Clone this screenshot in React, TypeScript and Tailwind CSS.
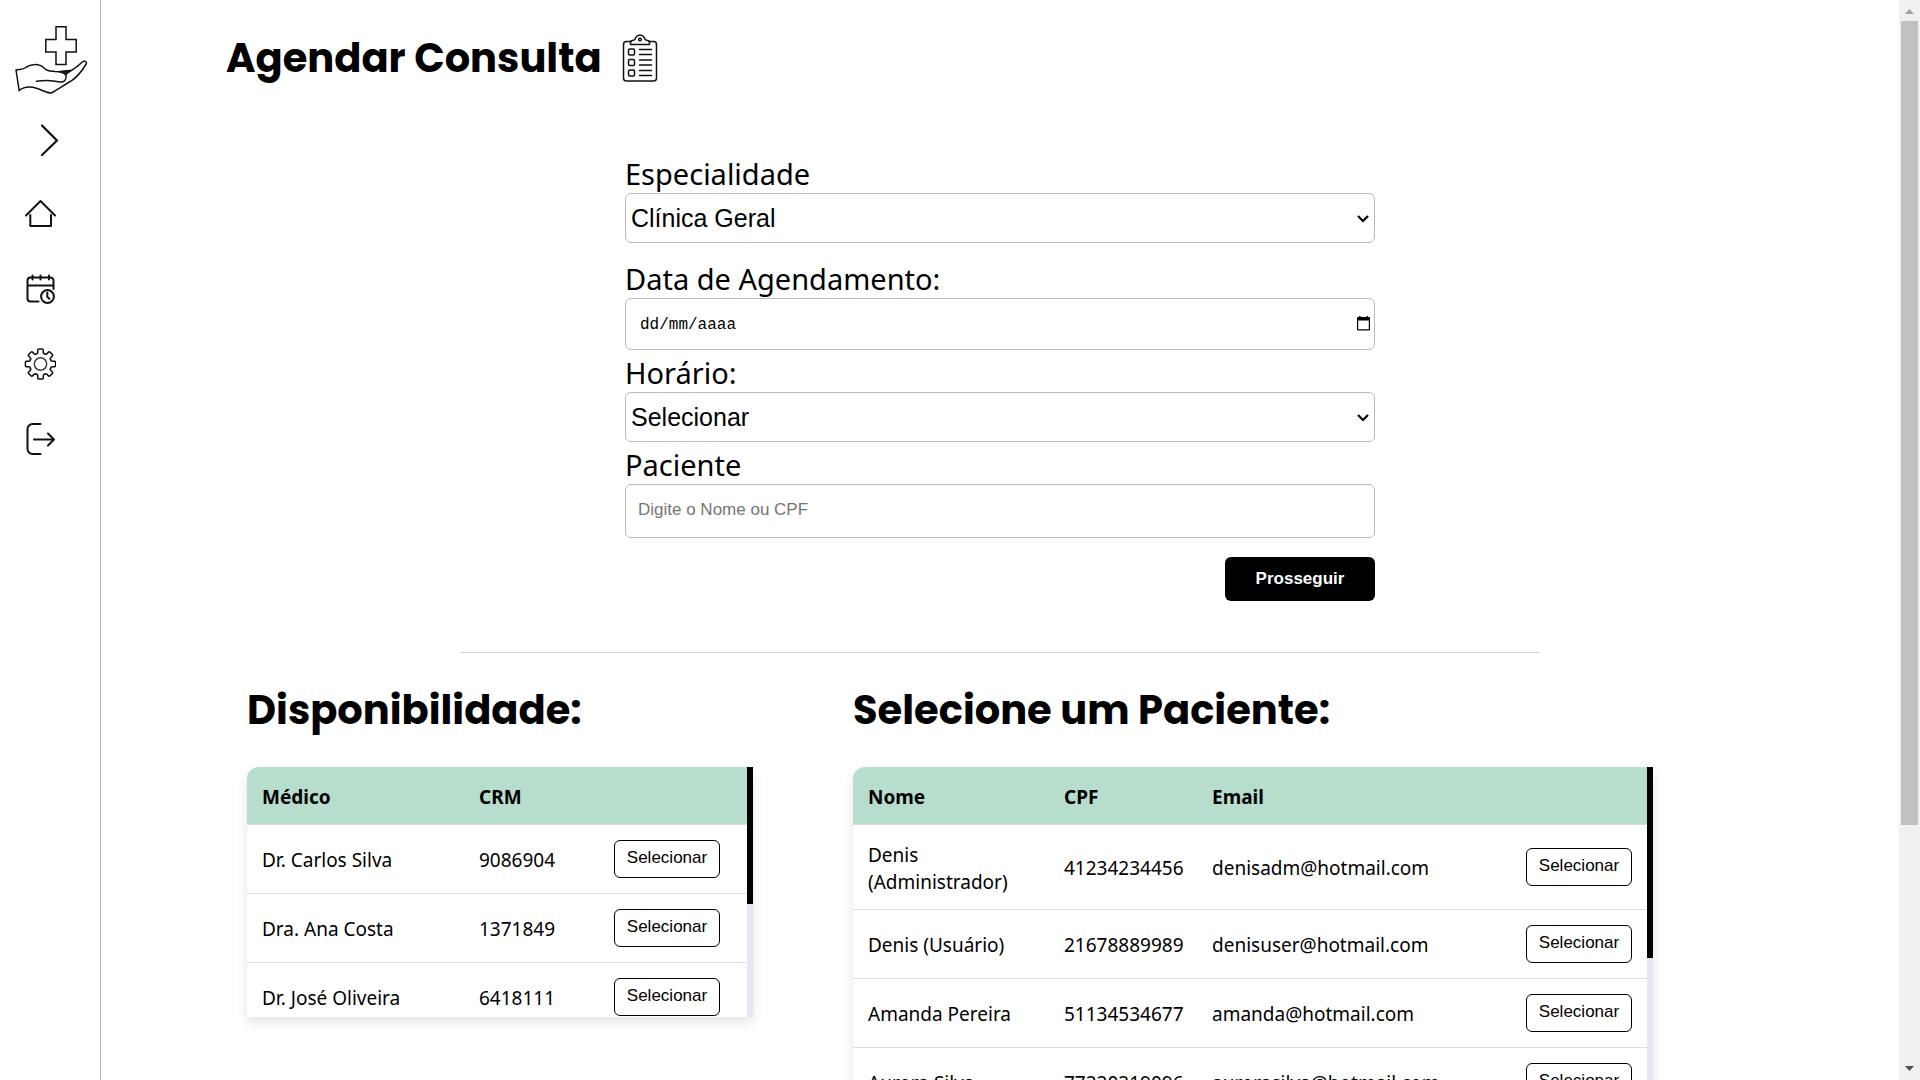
import React from "react";

const line = {
  fill: "none",
  stroke: "#111",
  strokeLinecap: "round" as const,
  strokeLinejoin: "round" as const,
};

function Logo() {
  return (
    <svg width="76" height="72" viewBox="13 24 76 72" strokeWidth="1.5" {...line} strokeLinejoin="miter">
      <path d="M56 26.7h10v12.8h10.2v12.6H66v12.4H56V52.1H45.8V39.5H56z" />
      <path d="M16 70c3-1 6 0 9-2 5-4 14-5 19 0 3 3.500 7 3 11 3.500 5 0 9 .5 11 4 1 4-2 7-6 6.500C52 80 44 80 36.500 81.200M16 70l3.200 20.500c5-4 12-4 18-2 5 1.500 9 4.500 14 4.500 8-4 14-9 20-12 6-4 12-12 15-17 1-3-2-3.500-4.500-1.500-5 5-10 8-16.500 12" />
      <path d="M60 71.500c4-.5 7-1 10-1-2 1.500-3 2.500-4.500 4" fill="#222" />
    </svg>
  );
}

function ChevronIcon() {
  return (
    <svg width="32" height="32" viewBox="0 0 32 32" strokeWidth="2.200" {...line}>
      <path d="M10 1.500 25 16.500 10 31" />
    </svg>
  );
}

function HomeIcon() {
  return (
    <svg width="32" height="32" viewBox="0 0 32 32" strokeWidth="2" {...line}>
      <path d="M2 17.500 16.500 3 31 17.500M6.300 17v11h20.700V17" />
    </svg>
  );
}

function CalendarIcon() {
  return (
    <svg width="32" height="32" viewBox="0 0 32 32" strokeWidth="2" {...line}>
      <path d="M14.500 28.500H6.500a3 3 0 0 1-3-3V7.500a3 3 0 0 1 3-3h20a3 3 0 0 1 3 3v8.500M3.500 12.500h26M8.500 2.500v4M16.500 2.500v4M25 2.500v4" />
      <circle cx="23.500" cy="23.500" r="6.400" />
      <path d="M23.300 19.500v4.200l2 2" />
    </svg>
  );
}

const GEAR = (() => {
  const at = (r: number, deg: number) => {
    const a = ((deg - 90) * Math.PI) / 180;
    return (16.5 + r * Math.cos(a)).toFixed(2) + " " + (16 + r * Math.sin(a)).toFixed(2);
  };
  let d = "";
  for (let k = 0; k < 8; k++) {
    const c = k * 45;
    d += (k ? "Q" + at(10.2, c - 17.5) + " " : "M") + at(12.4, c - 12.5);
    d += "Q" + at(15.2, c - 12) + " " + at(15.2, c - 7);
    d += "L" + at(15.2, c + 7);
    d += "Q" + at(15.2, c + 12) + " " + at(12.4, c + 12.5);
    d += "Q" + at(10.2, c + 17.5) + " " + at(11.2, c + 22.5);
  }
  return d + "Q" + at(10.2, -17.5) + " " + at(12.4, -12.5) + "Z";
})();

function GearIcon() {
  return (
    <svg width="32" height="32" viewBox="0 0 32 32" strokeWidth="1.500" {...line}>
      <path d={GEAR} />
      <circle cx="16.500" cy="16" r="6.200" stroke="#444" />
    </svg>
  );
}

function LogoutIcon() {
  return (
    <svg width="32" height="32" viewBox="0 0 32 32" strokeWidth="2" {...line}>
      <path d="M16.500 1H8.500a5 5 0 0 0-5 5v20a5 5 0 0 0 5 5h8M10 16.500h20M24 10.500l6 6-6 6" />
    </svg>
  );
}

function ClipboardIcon() {
  return (
    <svg width="36" height="48" viewBox="0 0 36 48" strokeWidth="1.500" {...line}>
      <path d="M9 7.500H4.500a3 3 0 0 0-3 3V44a3 3 0 0 0 3 3h27a3 3 0 0 0 3-3V10.500a3 3 0 0 0-3-3H27" />
      <path d="M8.500 10.500V8.500a2 2 0 0 1 2-2c3 0 2.500-1.500 3.500-3.300C15 1.500 16.500 1 18 1s3 .5 4 2.200c1 1.800.5 3.300 3.500 3.300a2 2 0 0 1 2 2v2z" />
      <circle cx="18" cy="5.500" r="1.300" />
      {[15, 25.5, 36].map((y) => (
        <g key={y}>
          <rect x="6.500" y={y} width="6" height="6" rx="1.200" />
          <path d={"M17.500 " + (y + 0.5) + "h12M17.500 " + (y + 5.5) + "h12"} />
        </g>
      ))}
    </svg>
  );
}

const NAV = [
  { label: "Início", Icon: HomeIcon },
  { label: "Agendamentos", Icon: CalendarIcon },
  { label: "Configurações", Icon: GearIcon },
  { label: "Sair", Icon: LogoutIcon },
];

function Sidebar() {
  return (
    <aside className="w-[101px] shrink-0 border-r border-[#b5b5b5]">
      <a href="#inicio" aria-label="Clínica" className="block pt-6 pl-[13px]">
        <Logo />
      </a>
      <nav className="mt-2 flex flex-col">
        <button type="button" aria-label="Expandir menu" className="flex h-[72px] items-center pl-8">
          <ChevronIcon />
        </button>
        {NAV.map(({ label, Icon }) => (
          <a key={label} href="#" aria-label={label} className="flex h-[75px] items-center pl-6">
            <Icon />
          </a>
        ))}
      </nav>
    </aside>
  );
}

function Label({ htmlFor, children }: { htmlFor: string; children: React.ReactNode }) {
  return (
    <label htmlFor={htmlFor} className="block h-[42px] text-[29px] leading-[46px]">
      {children}
    </label>
  );
}

function SelectField({ id, options }: { id: string; options: string[] }) {
  return (
    <div className="relative">
      <select
        id={id}
        className="block h-[50px] w-full appearance-none rounded-md border border-[#bbb] bg-white pl-[5px] font-['Liberation_Sans',sans-serif] text-[25px] leading-8"
      >
        {options.map((o) => (
          <option key={o}>{o}</option>
        ))}
      </select>
      <svg
        className="pointer-events-none absolute top-5 right-[5px]"
        width="13"
        height="10"
        viewBox="0 0 13 10"
        fill="none"
        stroke="#000"
        strokeWidth="2.200"
      >
        <path d="M1 3l5 5 5-5" />
      </svg>
    </div>
  );
}

const FIELD =
  "block w-full rounded-md border border-[#bbb] bg-white outline-none";

function BookingForm() {
  return (
    <form className="mx-auto w-full max-w-[750px]">
      <Label htmlFor="especialidade">Especialidade</Label>
      <SelectField id="especialidade" options={["Clínica Geral"]} />
      <div className="h-[13px]" />
      <Label htmlFor="data">Data de Agendamento:</Label>
      <div className="relative">
        <input
          id="data"
          type="text"
          placeholder="dd/mm/aaaa"
          className={FIELD + " h-[52px] px-3.5 pt-0.5 font-['Liberation_Mono',monospace] text-base placeholder:text-black"}
        />
        <svg
          className="pointer-events-none absolute top-[18px] right-[4px]"
          width="15"
          height="15"
          viewBox="0 0 15 15"
        >
          <path d="M3 0h1.500v1h6V0H12v1h1a1 1 0 0 1 1 1v11.500a1 1 0 0 1-1 1H2a1 1 0 0 1-1-1V2a1 1 0 0 1 1-1h1zM2.200 4.500v8.800h10.600V4.500z" fillRule="evenodd" />
        </svg>
      </div>
      <Label htmlFor="horario">Horário:</Label>
      <SelectField id="horario" options={["Selecionar"]} />
      <Label htmlFor="paciente">Paciente</Label>
      <input
        id="paciente"
        type="text"
        placeholder="Digite o Nome ou CPF"
        className={FIELD + " h-[54px] px-3 pb-0.5 font-['Liberation_Sans',sans-serif] text-[17px] placeholder:text-[#757575]"}
      />
      <div className="mt-[19px] flex justify-end">
        <button
          type="button"
          className="h-11 w-[150px] rounded-md bg-black font-['Liberation_Sans',sans-serif] text-[17px] font-bold text-white"
        >
          Prosseguir
        </button>
      </div>
    </form>
  );
}

type ListProps = {
  title: string;
  grow: string;
  height: string;
  thumb: string;
  headers: string[];
  widths: string[];
  rows: string[][];
};

function ListPanel({ title, grow, height, thumb, headers, widths, rows }: ListProps) {
  return (
    <section className={"min-w-0 basis-0 " + grow}>
      <h2 className={HEADING}>{title}</h2>
      <div
        className={
          "mt-[26px] flex overflow-hidden rounded-tl-xl bg-white shadow-[0_5px_12px_rgba(0,0,0,0.11)] " + height
        }
      >
        <div className="min-w-0 grow">
          <table className="w-full table-fixed border-collapse text-left text-[19px] leading-[27px]">
            <colgroup>
              {widths.map((w, i) => (
                <col key={i} className={w} />
              ))}
            </colgroup>
            <thead>
              <tr className="h-[57px] border-b border-[#ddd] bg-[#b7decd]">
                {headers.map((h) => (
                  <th key={h} scope="col" className="px-[15px] pt-1 font-bold">
                    {h}
                  </th>
                ))}
                <th scope="col" aria-label="Ação" />
              </tr>
            </thead>
            <tbody>
              {rows.map((r) => (
                <tr key={r[0]} className="border-b border-[#ddd]">
                  {r.map((c) => (
                    <td key={c} className="px-[15px] pt-[17px] pb-[13px]">
                      {c}
                    </td>
                  ))}
                  <td className="px-[15px] py-[15px]">
                    <button
                      type="button"
                      className="block h-[38px] w-[106px] rounded-md border border-black bg-white pb-0.5 font-['Liberation_Sans',sans-serif] text-[17px]"
                    >
                      Selecionar
                    </button>
                  </td>
                </tr>
              ))}
            </tbody>
          </table>
        </div>
        <div className="w-1.5 shrink-0 bg-[#e4e8f2]">
          <div className={"bg-black " + thumb} />
        </div>
      </div>
    </section>
  );
}

const HEADING = "font-[Poppins,Inter,sans-serif] text-[40px] leading-[62px] font-bold";

function PageScrollbar() {
  return (
    <div className="flex h-full w-[21px] shrink-0 flex-col items-center bg-[#f1f1f1]" aria-hidden="true">
      <svg width="21" height="21" viewBox="0 0 21 21">
        <path d="M6 14h9l-4.500-5z" fill="#a3a3a3" />
      </svg>
      <div className="min-h-0 w-full grow px-0.5">
        <div className="h-[77.5%] bg-[#c1c1c1]" />
      </div>
      <svg width="21" height="21" viewBox="0 0 21 21">
        <path d="M6 7h9l-4.500 5z" fill="#505050" />
      </svg>
    </div>
  );
}

export default function App() {
  return (
    <div className="flex h-screen overflow-hidden bg-white font-['Noto_Sans',sans-serif] text-black">
      <Sidebar />
      <main className="min-w-0 grow overflow-hidden">
        <header className="mb-[62px] flex items-center gap-5 pt-[27px] pl-[125px]">
          <h1 className={HEADING}>Agendar Consulta</h1>
          <ClipboardIcon />
        </header>
        <BookingForm />
        <hr className="mx-auto mt-[51px] w-3/5 border-[#d3d3d3]" />
        <div className="mt-[26px] flex gap-[100px] pr-[246px] pl-[146px]">
          <ListPanel
            title="Disponibilidade:"
            grow="grow-[506]"
            height="h-[250px]"
            thumb="h-[137px]"
            headers={["Médico", "CRM"]}
            widths={["w-[217px]", "w-[135px]", "w-auto"]}
            rows={[
              ["Dr. Carlos Silva", "9086904"],
              ["Dra. Ana Costa", "1371849"],
              ["Dr. José Oliveira", "6418111"],
            ]}
          />
          <ListPanel
            title="Selecione um Paciente:"
            grow="grow-[800]"
            height="h-[350px]"
            thumb="h-[191px]"
            headers={["Nome", "CPF", "Email"]}
            widths={["w-[196px]", "w-[148px]", "w-auto", "w-[136px]"]}
            rows={[
              ["Denis (Administrador)", "41234234456", "denisadm@hotmail.com"],
              ["Denis (Usuário)", "21678889989", "denisuser@hotmail.com"],
              ["Amanda Pereira", "51134534677", "amanda@hotmail.com"],
              ["Aurora Silva", "77220219096", "aurorasilva@hotmail.com"],
            ]}
          />
        </div>
      </main>
      <PageScrollbar />
    </div>
  );
}
